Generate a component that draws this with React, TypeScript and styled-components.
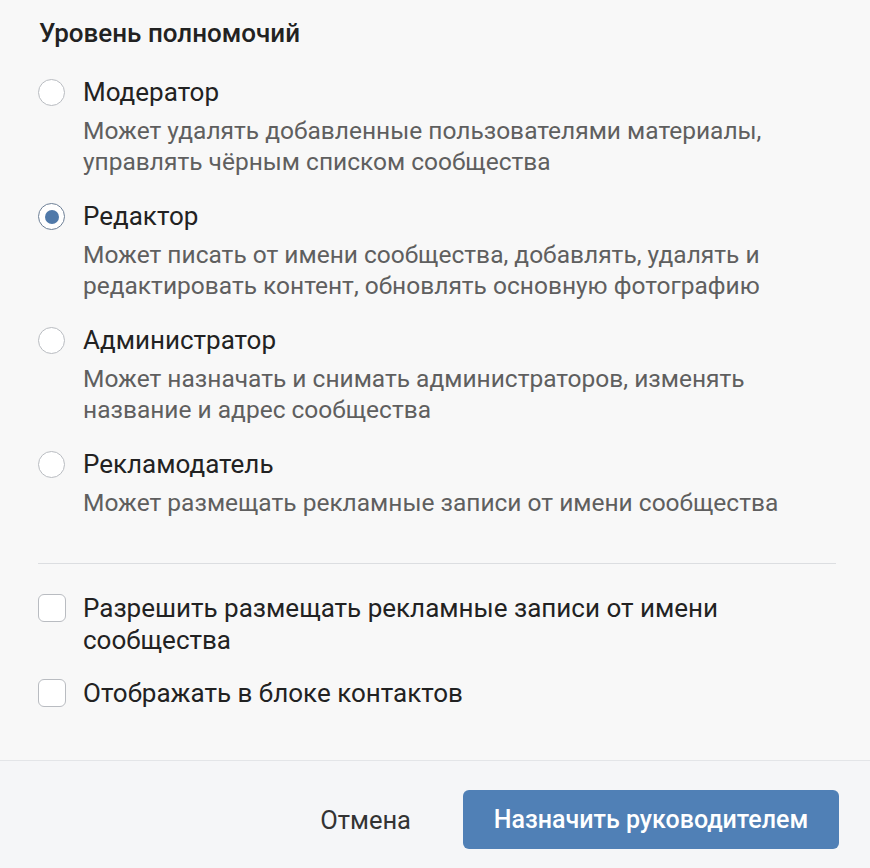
import React, { useState } from "react";
import styled, { createGlobalStyle } from "styled-components";

const Global = createGlobalStyle`
  html, body { margin: 0; padding: 0; background: #f8f8f8; }
  body { font-family: Roboto, "Noto Sans", "Liberation Sans", sans-serif; -webkit-font-smoothing: antialiased; }
  * { box-sizing: border-box; }
`;

const Page = styled.div`
  width: 870px;
  height: 868px;
  display: flex;
  flex-direction: column;
  background: #f8f8f8;
`;

const Body = styled.div`
  flex: 1;
  padding: 16px 34px 0 38px;
  display: flex;
  flex-direction: column;
`;

const Heading = styled.div`
  font-size: 26px;
  line-height: 34px;
  font-weight: 500;
  color: #222;
  padding-left: 1px;
  margin-bottom: 24px;
`;

const RadioList = styled.div`
  display: flex;
  flex-direction: column;
  gap: 21.5px;
`;

const Option = styled.label`
  display: grid;
  grid-template-columns: 27px 1fr;
  column-gap: 18px;
  cursor: pointer;
`;

const RadioCircle = styled.span<{ $checked: boolean }>`
  width: 27px;
  height: 27px;
  margin-top: 5px;
  border-radius: 50%;
  border: 1.5px solid ${(p) => (p.$checked ? "#6d7f96" : "#b9bcc1")};
  background: #fff;
  display: flex;
  align-items: center;
  justify-content: center;
  &::after {
    content: "";
    display: ${(p) => (p.$checked ? "block" : "none")};
    width: 14px;
    height: 14px;
    border-radius: 50%;
    background: #5079a9;
  }
`;

const OptionText = styled.div`
  display: flex;
  flex-direction: column;
  gap: 4.5px;
`;

const Label = styled.div`
  font-size: 26px;
  line-height: 36px;
  color: #222;
`;

const Desc = styled.div`
  font-size: 24.5px;
  line-height: 31px;
  color: #5f5f5f;
  white-space: nowrap;
`;

const Divider = styled.div`
  height: 1.5px;
  background: #dcdee1;
  margin: 45px 0 28px 0;
`;

const CheckList = styled.div`
  display: flex;
  flex-direction: column;
  gap: 21px;
`;

const CheckRow = styled.label`
  display: grid;
  grid-template-columns: 28px 1fr;
  column-gap: 17px;
  cursor: pointer;
`;

const CheckBox = styled.span`
  width: 28px;
  height: 28px;
  margin-top: 2px;
  border-radius: 6px;
  border: 1.5px solid #b9bcc1;
  background: #fff;
`;

const CheckText = styled.div`
  font-size: 26px;
  line-height: 32px;
  color: #222;
  padding-right: 90px;
`;

const Footer = styled.div`
  height: 108px;
  border-top: 1.5px solid #e3e5e8;
  background: #f5f6f8;
  display: flex;
  align-items: flex-start;
  justify-content: flex-end;
  padding: 29px 31px 0 0;
  gap: 30px;
`;

const CancelButton = styled.button`
  height: 59px;
  padding: 0 22px;
  border: none;
  background: transparent;
  font-family: inherit;
  font-size: 25.5px;
  color: #333;
  cursor: pointer;
`;

const PrimaryButton = styled.button`
  width: 376px;
  height: 59px;
  border: none;
  border-radius: 6px;
  background: #5080b6;
  color: #fff;
  font-family: inherit;
  font-size: 25px;
  font-weight: 500;
  cursor: pointer;
`;

const options = [
  {
    id: "moderator",
    label: "Модератор",
    desc: ["Может удалять добавленные пользователями материалы,", "управлять чёрным списком сообщества"],
  },
  {
    id: "editor",
    label: "Редактор",
    desc: ["Может писать от имени сообщества, добавлять, удалять и", "редактировать контент, обновлять основную фотографию"],
  },
  {
    id: "admin",
    label: "Администратор",
    desc: ["Может назначать и снимать администраторов, изменять", "название и адрес сообщества"],
  },
  {
    id: "advertiser",
    label: "Рекламодатель",
    desc: ["Может размещать рекламные записи от имени сообщества"],
  },
];

export default function App() {
  const [level, setLevel] = useState("editor");
  return (
    <Page>
      <Global />
      <Body>
        <Heading>Уровень полномочий</Heading>
        <RadioList>
          {options.map((o) => (
            <Option key={o.id} onClick={() => setLevel(o.id)}>
              <RadioCircle $checked={level === o.id} />
              <OptionText>
                <Label>{o.label}</Label>
                <Desc>
                  {o.desc.map((d, i) => (
                    <div key={i}>{d}</div>
                  ))}
                </Desc>
              </OptionText>
            </Option>
          ))}
        </RadioList>
        <Divider />
        <CheckList>
          <CheckRow>
            <CheckBox />
            <CheckText>Разрешить размещать рекламные записи от имени сообщества</CheckText>
          </CheckRow>
          <CheckRow>
            <CheckBox />
            <CheckText>Отображать в блоке контактов</CheckText>
          </CheckRow>
        </CheckList>
      </Body>
      <Footer>
        <CancelButton>Отмена</CancelButton>
        <PrimaryButton>Назначить руководителем</PrimaryButton>
      </Footer>
    </Page>
  );
}
